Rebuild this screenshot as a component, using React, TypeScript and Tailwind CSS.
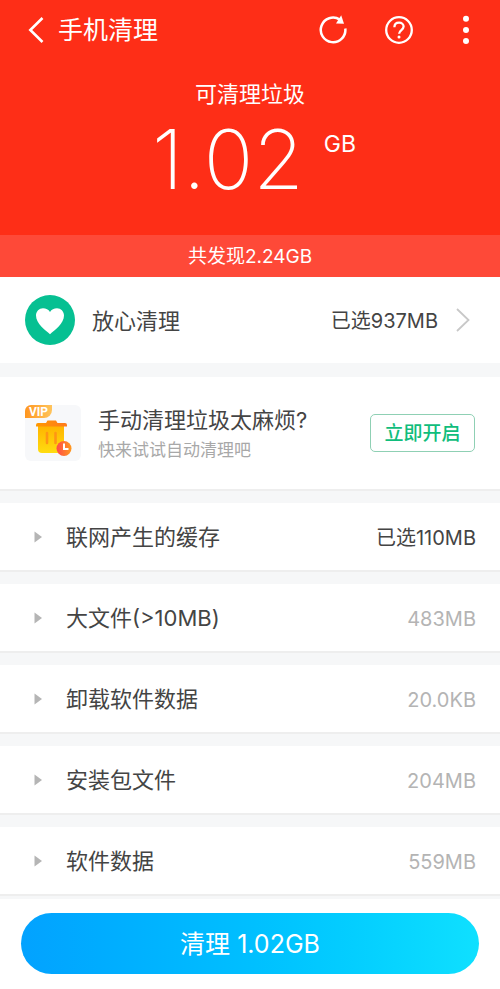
import { useState } from "react";

interface CleanItem {
    name: string;
    size: string;
    selected?: boolean;
}

const items: CleanItem[] = [
    { name: "联网产生的缓存", size: "已选110MB", selected: true },
    { name: "大文件(>10MB)", size: "483MB" },
    { name: "卸载软件数据", size: "20.0KB" },
    { name: "安装包文件", size: "204MB" },
    { name: "软件数据", size: "559MB" },
];

function BackIcon() {
    return (
        <svg width="16" height="28" viewBox="0 0 16 28" fill="none" stroke="currentColor" strokeWidth="2.6">
            <path d="M14.5 2 2.3 14l12.2 12" />
        </svg>
    );
}

function RefreshIcon() {
    return (
        <svg width="30" height="30" viewBox="0 0 30 30" fill="none">
            <path d="M27.300 13.500A12.300 12.300 0 1 1 21.800 4.600" stroke="currentColor" strokeWidth="2.500" />
            <path d="M23.200.2 26 8.800 18 8.400Z" fill="currentColor" />
        </svg>
    );
}

function HelpIcon() {
    return (
        <svg width="30" height="30" viewBox="0 0 30 30" fill="none" stroke="currentColor" strokeWidth="2.3">
            <circle cx="15" cy="15" r="12.8" />
            <path d="M10.4 12.2c0-2.8 2-4.5 4.7-4.5 2.6 0 4.5 1.6 4.5 3.9 0 3.5-4.5 3.5-4.5 7.2" />
            <circle cx="15" cy="22" r="1.5" fill="currentColor" stroke="none" />
        </svg>
    );
}

function MoreIcon() {
    return (
        <svg width="8" height="30" viewBox="0 0 8 30" fill="currentColor">
            <circle cx="4" cy="3.8" r="3" />
            <circle cx="4" cy="15" r="3" />
            <circle cx="4" cy="26" r="3" />
        </svg>
    );
}

function HeartIcon() {
    return (
        <svg width="50" height="50" viewBox="0 0 50 50" className="shrink-0">
            <circle cx="25" cy="25" r="25" fill="#06c092" />
            <path
                d="M25 39.2C20.500 35.500 11 28.500 11 20.600c0-4.200 3.200-7.300 7-7.300 3 0 5.500 1.300 7 3.700 1.500-2.400 4-3.700 7-3.700 3.800 0 7 3.100 7 7.300 0 7.900-9.500 14.900-14 18.600Z"
                fill="#fff"
            />
        </svg>
    );
}

function VipTrashIcon() {
    return (
        <div className="relative h-14 w-14 shrink-0 overflow-hidden rounded-md bg-[#f7f8fa]">
            <svg width="56" height="56" viewBox="0 0 56 56" fill="none">
                <defs>
                    <linearGradient id="bin" x1="0" y1="0" x2="0" y2="1">
                        <stop offset="0" stopColor="#ffb400" />
                        <stop offset="1" stopColor="#ffdc10" />
                    </linearGradient>
                    <linearGradient id="lid" x1="0" y1="0" x2="1" y2="0">
                        <stop offset="0" stopColor="#ff9800" />
                        <stop offset="1" stopColor="#ff7a1c" />
                    </linearGradient>
                    <linearGradient id="clock" x1="0" y1="0" x2="1" y2="0">
                        <stop offset="0" stopColor="#ff4a4a" />
                        <stop offset="1" stopColor="#ff9a1e" />
                    </linearGradient>
                    <linearGradient id="tag" x1="0" y1="0" x2="1" y2="0">
                        <stop offset="0" stopColor="#ff961f" />
                        <stop offset="1" stopColor="#ffc45c" />
                    </linearGradient>
                </defs>
                <path d="M0 0h27v5a8 8 0 0 1-8 8H0Z" fill="url(#tag)" />
                <path d="M13 21h26v23a4 4 0 0 1-4 4H17a4 4 0 0 1-4-4Z" fill="url(#bin)" />
                <path d="M22 28v10M30.500 28v10" stroke="#ff9614" strokeWidth="2.600" strokeLinecap="round" />
                <path d="M21 18 22.500 15.500h8.500l1.500 2.500h7.500a2 2 0 0 1 2 2v1.500h-31v-1.500a2 2 0 0 1 2-2Z" fill="url(#lid)" />
                <circle cx="39" cy="43.500" r="7.500" fill="url(#clock)" />
                <path d="M39 38.500v5.500h4.500" stroke="#fff" strokeWidth="2" />
            </svg>
            <span className="absolute top-0 left-1 font-['Roboto',sans-serif] text-xs leading-[14px] font-bold text-white">
                VIP
            </span>
        </div>
    );
}

function ItemRow({ name, size, selected }: CleanItem) {
    const [open, setOpen] = useState(false);

    return (
        <li className="border-b-2 border-[#eeeeee] bg-white">
            <button
                type="button"
                aria-expanded={open}
                onClick={() => setOpen(!open)}
                className="flex h-[67px] w-full items-center pr-6 pl-[34px] text-left"
            >
                <svg
                    width="8"
                    height="12"
                    viewBox="0 0 8 12"
                    fill="#b5b5b5"
                    className={open ? "rotate-90" : undefined}
                >
                    <path d="M.5.5 8 6 .5 11.500Z" />
                </svg>
                <span className="ml-6 flex-1 pt-[2px] text-[22px]">{name}</span>
                <span className={selected ? "pt-[2px] text-[20px]" : "pt-[2px] text-[20px] text-[#b4b4b4]"}>{size}</span>
            </button>
        </li>
    );
}

export default function App() {
    return (
        <div className="flex min-h-screen flex-col bg-[#f6f7f8] font-['Inter','Noto_Sans_CJK_SC',sans-serif] text-[#444444]">
            <header className="bg-[#fe2e17] text-white">
                {/* Title bar */}
                <div className="flex h-[60px] items-center pr-[30px] pl-7">
                    <button type="button" aria-label="返回">
                        <BackIcon />
                    </button>
                    <h1 className="ml-[14px] flex-1 pt-[2px] text-[25px]">手机清理</h1>
                    <div className="flex items-center">
                        <button type="button" aria-label="刷新">
                            <RefreshIcon />
                        </button>
                        <button type="button" aria-label="帮助" className="ml-9">
                            <HelpIcon />
                        </button>
                        <button type="button" aria-label="更多" className="ml-12">
                            <MoreIcon />
                        </button>
                    </div>
                </div>

                {/* Junk total */}
                <div className="flex h-[175px] flex-col items-center pt-[18px]">
                    <p className="text-[22px] leading-8">可清理垃圾</p>
                    <p className="flex items-start pl-2">
                        <span className="text-[82px] leading-[100px] font-extralight">1.02</span>
                        <span className="ml-5 pt-[18px] text-[23px] leading-8">GB</span>
                    </p>
                </div>
                <p className="bg-[#fe4938] pt-[2px] text-center text-[19px] leading-[40px]">共发现2.24GB</p>
            </header>

            <main className="flex flex-1 flex-col gap-3">
                <button type="button" className="mb-[2px] flex h-[86px] items-center bg-white pr-[30px] pl-[25px] text-left">
                    <HeartIcon />
                    <span className="ml-[17px] flex-1 pt-[2px] text-[22px]">放心清理</span>
                    <span className="pt-[2px] text-[20px]">已选937MB</span>
                    <svg width="14" height="24" viewBox="0 0 14 24" fill="none" stroke="#c8c8c8" strokeWidth="1.8" className="ml-[18px]">
                        <path d="M1 1 12.500 12 1 23" />
                    </svg>
                </button>

                <section className="flex h-[114px] items-center border-b-2 border-[#eeeeee] bg-white px-[25px]">
                    <VipTrashIcon />
                    <div className="ml-[17px] flex-1 pt-[2px]">
                        <h2 className="text-[22px] leading-8">手动清理垃圾太麻烦?</h2>
                        <p className="text-[17px] leading-7 text-[#a8a8a8]">快来试试自动清理吧</p>
                    </div>
                    <button
                        type="button"
                        className="h-[38px] w-[105px] rounded-[5px] border border-[#8fd0b4] pt-[2px] text-[19px] font-medium text-[#10bd7c]"
                    >
                        立即开启
                    </button>
                </section>

                <ul className="flex flex-col gap-3">
                    {items.map((item) => (
                        <ItemRow key={item.name} {...item} />
                    ))}
                </ul>
            </main>

            <footer className="mt-[3px] bg-white px-[21px] pt-[14px] pb-[15px]">
                <button
                    type="button"
                    className="h-[61px] w-full rounded-full bg-linear-to-r from-[#03a2ff] via-[#00bfff] to-[#0fe0ff] pt-[2px] text-[25px] text-white"
                >
                    清理 1.02GB
                </button>
            </footer>
        </div>
    );
}
